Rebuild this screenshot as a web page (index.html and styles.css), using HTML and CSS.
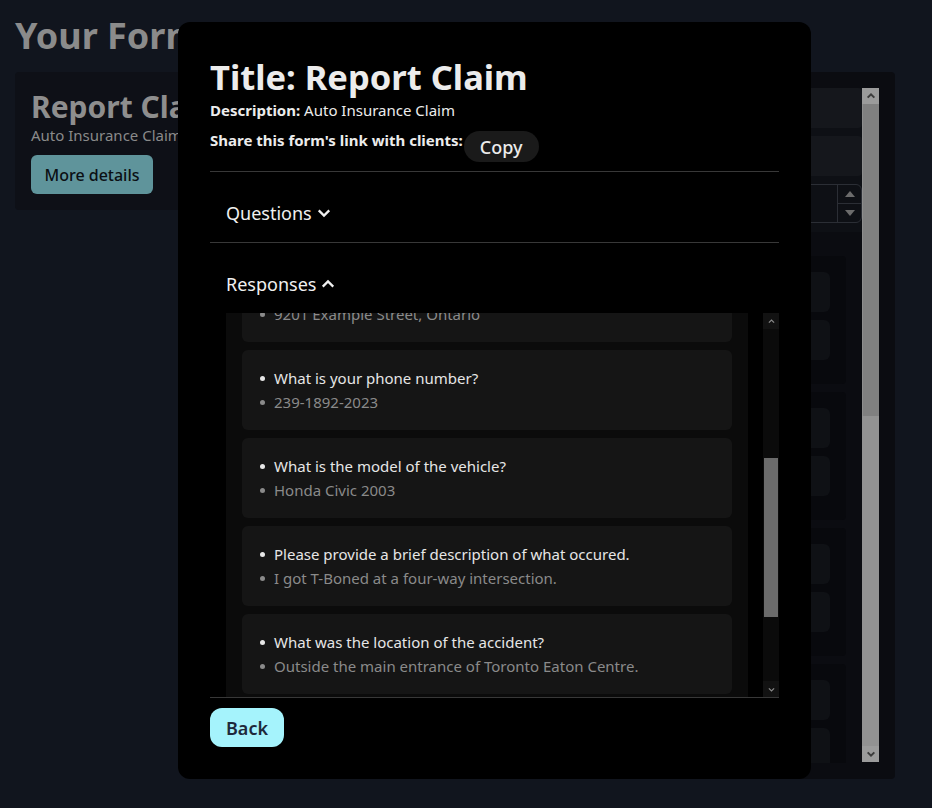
FILE: index.html
```html
<!DOCTYPE html>
<html lang="en">
<head>
  <meta charset="UTF-8">
  <meta name="viewport" content="width=device-width, initial-scale=1">
  <title>Your Forms</title>
  <link rel="stylesheet" href="styles.css">
</head>
<body>

<main class="page">
  <h1 class="page-title">Your Forms</h1>
  <div class="page-grid">
    <!-- form list -->
    <div class="form-card">
      <h2>Report Claim</h2>
      <p>Auto Insurance Claim</p>
      <button class="btn-details">More details</button>
    </div>

    <!-- editor panel (behind the modal) -->
    <div class="edit-panel">
      <div class="edit-scroll">
        <div class="edit-top">
          <div class="field"></div>
          <div class="field"></div>
          <div class="field field-number">
            <div class="spin">
              <span class="spin-up"></span>
              <span class="spin-down"></span>
            </div>
          </div>
        </div>
        <div class="q-card"><div class="q-box"></div><div class="q-box"></div></div>
        <div class="q-card"><div class="q-box"></div><div class="q-box"></div></div>
        <div class="q-card"><div class="q-box"></div><div class="q-box"></div></div>
        <div class="q-card"><div class="q-box"></div><div class="q-box"></div></div>
      </div>
      <div class="bar bar-light">
        <span class="bar-btn">
          <svg viewBox="0 0 12 12" width="10" height="10"><path d="M2 8l4-4 4 4" fill="none" stroke="#3c3c3c" stroke-width="2.4"/></svg>
        </span>
        <span class="bar-thumb"></span>
        <span class="bar-track"></span>
        <span class="bar-btn">
          <svg viewBox="0 0 12 12" width="10" height="10"><path d="M2 4l4 4 4-4" fill="none" stroke="#3c3c3c" stroke-width="2.4"/></svg>
        </span>
      </div>
    </div>
  </div>
</main>

<!-- form details modal -->
<div class="modal">
  <h2 class="modal-title">Title: Report Claim</h2>
  <p class="modal-desc"><strong>Description:</strong> Auto Insurance Claim</p>
  <div class="share-row">
    <strong>Share this form's link with clients:</strong>
    <button class="btn-copy">Copy</button>
  </div>

  <div class="section">
    <button class="section-head">Questions
      <svg viewBox="0 0 24 24" width="18" height="18"><path d="M5 8.5l7 7 7-7" fill="none" stroke="#f0f0f0" stroke-width="3"/></svg>
    </button>
  </div>

  <div class="section section-open">
    <button class="section-head">Responses
      <svg viewBox="0 0 24 24" width="18" height="18"><path d="M5 15.5l7-7 7 7" fill="none" stroke="#f0f0f0" stroke-width="3"/></svg>
    </button>
    <div class="responses">
      <div class="resp-view" id="respView">
        <div class="resp-box">
          <div class="resp-item">
            <ul>
              <li class="q">What is your full name?</li>
              <li class="a">John Smith</li>
            </ul>
          </div>
          <div class="resp-item">
            <ul>
              <li class="q">What is your email address?</li>
              <li class="a">john.smith@example.com</li>
            </ul>
          </div>
          <div class="resp-item">
            <ul>
              <li class="q">What is your home address?</li>
              <li class="a">9201 Example Street, Ontario</li>
            </ul>
          </div>
          <div class="resp-item">
            <ul>
              <li class="q">What is your phone number?</li>
              <li class="a">239-1892-2023</li>
            </ul>
          </div>
          <div class="resp-item">
            <ul>
              <li class="q">What is the model of the vehicle?</li>
              <li class="a">Honda Civic 2003</li>
            </ul>
          </div>
          <div class="resp-item">
            <ul>
              <li class="q">Please provide a brief description of what occured.</li>
              <li class="a">I got T-Boned at a four-way intersection.</li>
            </ul>
          </div>
          <div class="resp-item">
            <ul>
              <li class="q">What was the location of the accident?</li>
              <li class="a">Outside the main entrance of Toronto Eaton Centre.</li>
            </ul>
          </div>
          <div class="resp-item">
            <ul>
              <li class="q">When did the accident happen?</li>
              <li class="a">March 14, 2023</li>
            </ul>
          </div>
        </div>
      </div>
      <div class="bar bar-dark">
        <span class="bar-btn">
          <svg viewBox="0 0 12 12" width="9" height="9"><path d="M2.5 7.5l3.5-3.5 3.5 3.5" fill="none" stroke="#8a8a8a" stroke-width="1.6"/></svg>
        </span>
        <span class="bar-track bar-track-top"></span>
        <span class="bar-thumb"></span>
        <span class="bar-track"></span>
        <span class="bar-btn">
          <svg viewBox="0 0 12 12" width="9" height="9"><path d="M2.5 4.5l3.5 3.5 3.5-3.5" fill="none" stroke="#8a8a8a" stroke-width="1.6"/></svg>
        </span>
      </div>
    </div>
  </div>

  <div class="modal-foot">
    <button class="btn-back">Back</button>
  </div>
</div>

<script>
  document.getElementById("respView").scrollTop = 243;
</script>

</body>
</html>
```

FILE: styles.css
```css
* {
  box-sizing: border-box;
}

body {
  margin: 0;
  height: 808px;
  overflow: hidden;
  font-family: "Noto Sans", "Open Sans", sans-serif;
  background: #11151e;
  color: #8e8e8e;
}

button {
  font-family: inherit;
  border: none;
  cursor: pointer;
}

/* background page */
.page {
  padding: 16px 37px 0 15px;
}

.page-title {
  margin: 0 0 16px;
  font-size: 36px;
  line-height: 40px;
  font-weight: 700;
  color: #8b8b8b;
}

.page-grid {
  display: grid;
  grid-template-columns: 250px 1fr;
  gap: 16px;
  align-items: start;
}

.form-card {
  background: #0e1017;
  border-radius: 4px;
  padding: 16px;
}

.form-card h2 {
  margin: 2px 0 0;
  font-size: 30px;
  line-height: 34px;
  color: #8e8e8e;
}

.form-card p {
  margin: 0 0 9px;
  font-size: 15px;
  line-height: 22px;
  color: #8a8a8a;
}

.btn-details {
  width: 122px;
  height: 39px;
  border-radius: 6px;
  background: #5f949b;
  color: #0b0f13;
  font-size: 16px;
  font-weight: 500;
}

.edit-panel {
  height: 707px;
  background: #0b0c11;
  border-radius: 4px;
  padding: 16px;
  display: flex;
}

.edit-scroll {
  flex: 1;
  overflow: hidden;
  display: flex;
  flex-direction: column;
  gap: 8px;
}

.edit-top {
  display: flex;
  flex-direction: column;
  gap: 8px;
  background: #0e1015;
  padding-bottom: 9px;
  margin-bottom: 16px;
}

.field {
  height: 40px;
  background: #15171c;
  border-radius: 4px;
}

.field-number {
  height: 39px;
  background: transparent;
  border: 1px solid #2b2e35;
  border-radius: 6px;
  display: flex;
  justify-content: flex-end;
}

.spin {
  width: 24px;
  border-left: 1px solid #2b2e35;
  display: flex;
  flex-direction: column;
}

.spin span {
  flex: 1;
  display: flex;
  align-items: center;
  justify-content: center;
}

.spin-up {
  border-bottom: 1px solid #2b2e35;
}

.spin-up::after,
.spin-down::after {
  content: "";
  border-left: 5px solid transparent;
  border-right: 5px solid transparent;
}

.spin-up::after {
  border-bottom: 6px solid #6c6c6c;
}

.spin-down::after {
  border-top: 6px solid #6c6c6c;
}

.q-card {
  flex-shrink: 0;
  margin-right: 16px;
  background: #08090d;
  border-radius: 4px;
  padding: 16px 16px 24px;
  display: flex;
  flex-direction: column;
  gap: 8px;
}

.q-box {
  height: 40px;
  background: #0f1115;
  border-radius: 6px;
}

/* fake scrollbars */
.bar {
  display: flex;
  flex-direction: column;
  flex-shrink: 0;
}

.bar-btn {
  height: 16px;
  display: flex;
  align-items: center;
  justify-content: center;
}

.bar-light {
  width: 17px;
  margin-bottom: 1px;
  background: #929292;
}

.bar-light .bar-btn {
  background: #9b9b9b;
}

.bar-light .bar-thumb {
  height: 312px;
  background: #808080;
  border-left: 1px solid #8e8e8e;
}

.bar-track {
  flex: 1;
}

.bar-dark {
  width: 16px;
  background: #0b0b0b;
}

.bar-dark .bar-btn {
  background: #121212;
}

.bar-dark .bar-track-top {
  flex: 0 0 129px;
}

.bar-dark .bar-thumb {
  height: 159px;
  margin: 0 1px;
  background: #6b6b6b;
}

/* modal */
.modal {
  position: fixed;
  left: 178px;
  top: 22px;
  width: 633px;
  height: 757px;
  background: #000;
  border-radius: 12px;
  padding: 32px;
  display: flex;
  flex-direction: column;
  color: #ececec;
}

.modal-title {
  margin: 1px 0 0;
  font-size: 34.5px;
  line-height: 44px;
  font-weight: 700;
}

.modal-desc {
  margin: 0;
  font-size: 15px;
  line-height: 22px;
}

.share-row {
  display: flex;
  align-items: flex-start;
  margin: 9px 0 9px;
  font-size: 15px;
  line-height: 20px;
}

.btn-copy {
  margin: 1px 0 0 1px;
  padding: 5px 16px 3px;
  border-radius: 999px;
  background: #1a1a1a;
  color: #ebebeb;
  font-size: 18px;
  line-height: 23px;
  font-weight: 500;
}

.section {
  border-top: 1px solid #383838;
}

.section-open {
  flex: 1;
  min-height: 0;
  display: flex;
  flex-direction: column;
}

.section-head {
  display: flex;
  align-items: center;
  gap: 3px;
  padding: 27px 16px 15px;
  background: none;
  color: #f0f0f0;
  font-size: 18px;
  line-height: 28px;
}

.responses {
  flex: 1;
  min-height: 0;
  display: flex;
  gap: 15px;
  padding-left: 16px;
}

.resp-view {
  flex: 1;
  overflow: hidden;
  background: #0b0b0b;
}

.resp-box {
  padding: 16px;
  display: flex;
  flex-direction: column;
  gap: 8px;
}

.resp-item {
  background: #151515;
  border-radius: 6px;
  padding: 16px;
}

.resp-item ul {
  margin: 0;
  padding: 0;
  list-style: none;
  font-size: 15px;
  line-height: 24px;
}

.resp-item li {
  display: flex;
  align-items: center;
}

.resp-item li::before {
  content: "";
  width: 5px;
  height: 5px;
  margin: 0 9px 0 2px;
  border-radius: 50%;
  background: currentColor;
  flex-shrink: 0;
}

.resp-item .q {
  color: #e6e6e6;
}

.resp-item .a {
  color: #8a8a8a;
}

.modal-foot {
  border-top: 1px solid #383838;
  padding-top: 10px;
}

.btn-back {
  padding: 7px 16px 5px;
  border-radius: 12px;
  background: #a5f3fc;
  color: #1e293b;
  font-size: 18px;
  line-height: 27px;
  font-weight: 600;
}
```
